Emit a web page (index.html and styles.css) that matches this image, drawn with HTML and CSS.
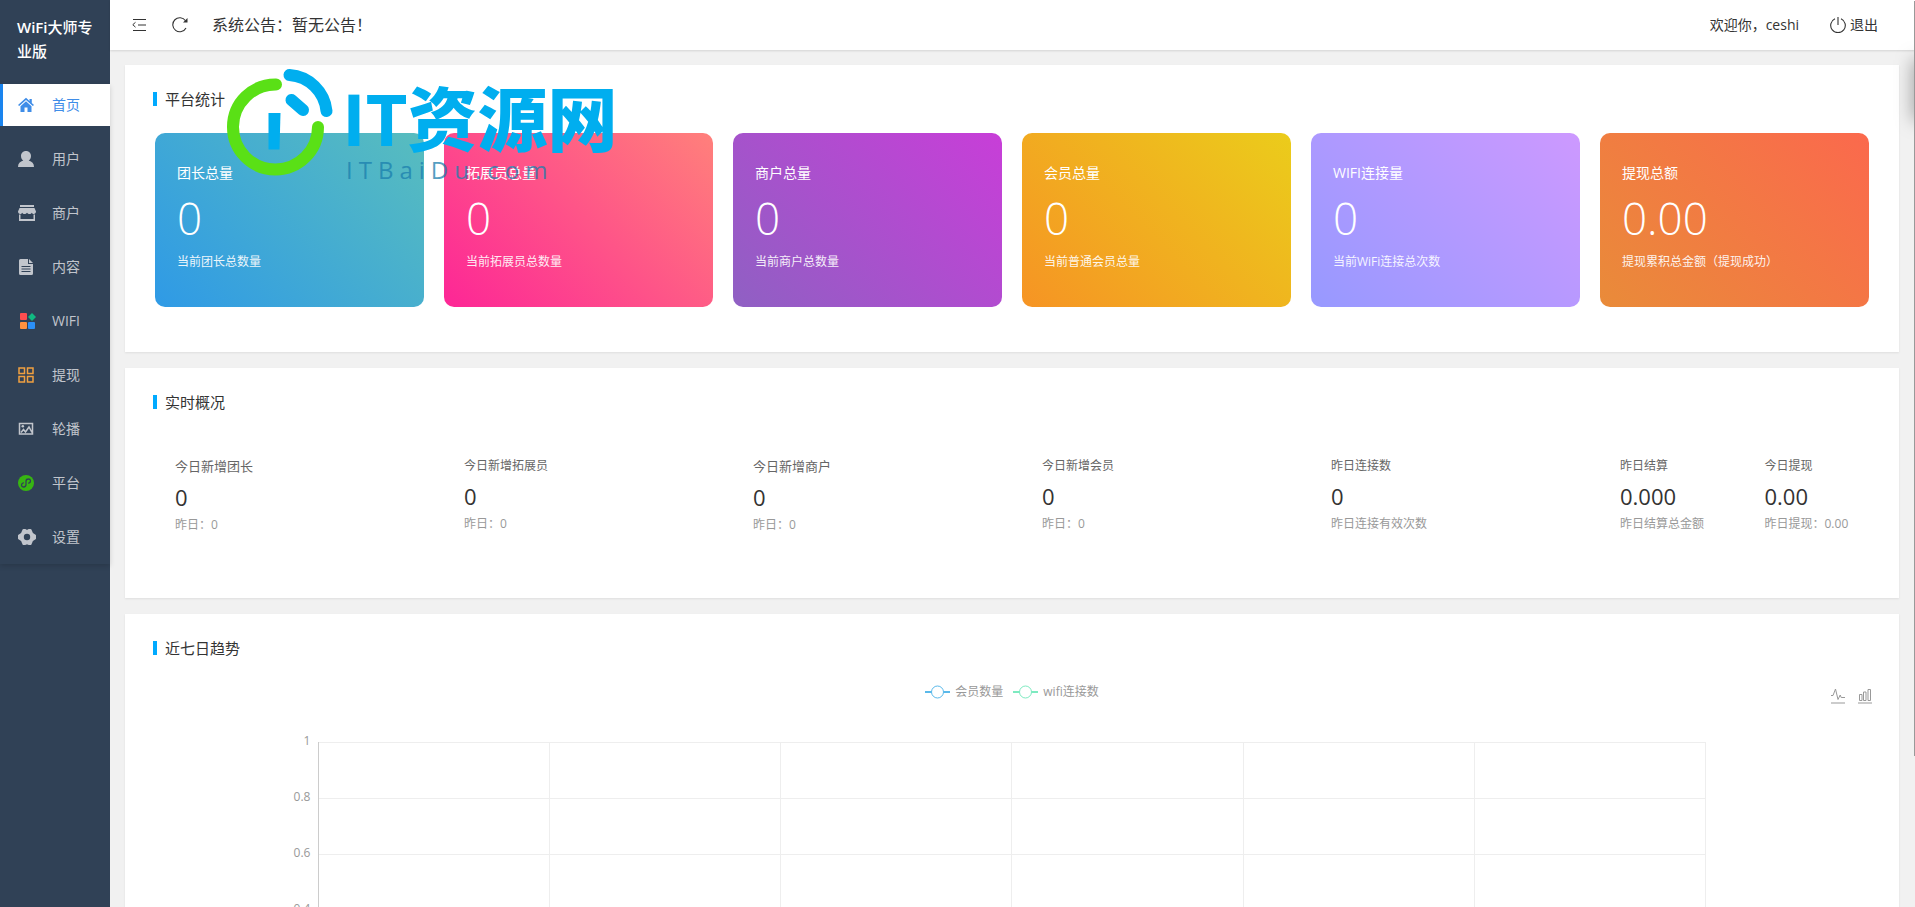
FILE: index.html
```html
<!DOCTYPE html>
<html lang="zh-CN">
<head>
<meta charset="utf-8">
<title>WiFi大师专业版</title>
<link rel="stylesheet" href="styles.css">
</head>
<body>
<div class="layout">
  <aside class="sidebar">
    <h1 class="brand"><b>WiFi</b>大师专业版</h1>
    <nav class="nav">
      <a class="nav-item active" href="#"><svg class="icon" viewBox="0 0 16 16"><path fill="currentColor" d="M8 .8 0 8l1.200 1L8 3l6.800 6 1.200-1-2.200-2V2h-2.300v2zM8 4.300 2.500 9.200V15h4v-4.500h3V15h4V9.200z"/></svg>首页</a>
      <a class="nav-item" href="#"><svg class="icon" viewBox="0 0 16 16"><path fill="currentColor" d="M8 0c3 0 5 2.200 5 5 0 2-.9 3.700-2.300 4.600C14 10.500 16 12.500 16 16H0c0-3.500 2-5.500 5.300-6.400C3.900 8.700 3 7 3 5c0-2.800 2-5 5-5z"/></svg>用户</a>
      <a class="nav-item" href="#"><svg class="icon wide" viewBox="0 0 18 16"><path fill="currentColor" d="M2 0h14v2H2zM1.500 3h15L18 6.500c0 2.800-3.200 3.200-4.200 1.200-.8 1.800-3.600 1.800-4.800 0-1.200 1.800-4 1.800-4.800 0C3.200 9.700 0 9.300 0 6.500zM1 9.500h1.500V14h13V9.500H17V16H1z"/></svg>商户</a>
      <a class="nav-item" href="#"><svg class="icon" viewBox="0 0 16 16"><path fill="currentColor" d="M1 1.500Q1 0 2.500 0H10v5h5v9.500q0 1.500-1.500 1.500h-11Q1 16 1 14.500zM11 0l4 4h-4z"/><path stroke="#304156" d="M3.500 7.500h9M3.500 10h9M3.500 12.500h9"/></svg>内容</a>
      <a class="nav-item" href="#"><svg class="icon wide" viewBox="0 0 18 16"><rect x="2" width="7" height="7" rx="1" fill="#ff4d4f"/><path fill="#10b981" d="m14 0 4 4-4 4-4-4z"/><rect x="2" y="9" width="7" height="7" rx="1" fill="#ff9140"/><rect x="10" y="9" width="7" height="7" rx="1" fill="#2b8ff7"/></svg>WIFI</a>
      <a class="nav-item" href="#"><svg class="icon" viewBox="0 0 16 16"><path fill="none" stroke="#f0a040" stroke-width="1.500" d="M1 1h5.500v5.500H1zM9.500 1H15v5.500H9.500zM1 9.500h5.500V15H1zM9.500 9.500H15V15H9.500z"/></svg>提现</a>
      <a class="nav-item" href="#"><svg class="icon" viewBox="0 0 16 16"><path fill="none" stroke="currentColor" stroke-width="1.500" d="M1.500 2.500h13v10.500h-13zM3 11.500l2.500-3 2 2.500L11 6l3 5.500"/><circle cx="4.800" cy="5.300" r="1.300" fill="currentColor"/></svg>轮播</a>
      <a class="nav-item" href="#"><svg class="icon" viewBox="0 0 16 16"><circle cx="8" cy="8" r="8" fill="#37b512"/><path fill="none" stroke="#304156" stroke-width="1.300" stroke-linecap="round" d="M5.300 7.800C2.600 8.600 3 12.200 5.700 12c1.500-.1 2.300-1.100 2.300-2.500v-3C8 5 9 4 10.300 4c2.700-.1 3 3.400.4 4.200"/></svg>平台</a>
      <a class="nav-item" href="#"><svg class="icon wide" viewBox="0 0 18 16"><path fill="currentColor" stroke="currentColor" stroke-width="2" stroke-linejoin="round" d="M5.500 1h1.800L9 2l1.700-1h1.800L14 4.500 17 6.500v3L14 11.500 12.500 15h-1.800L9 14l-1.700 1H5.500L4 11.500 1 9.500v-3L4 4.500z"/><circle cx="9" cy="8" r="3.200" fill="#304156"/></svg>设置</a>
    </nav>
  </aside>
  <div class="body">
    <header class="topbar">
      <button class="tool" aria-label="收起菜单"><svg class="icon" viewBox="0 0 16 16"><path fill="none" stroke="currentColor" d="M1 2.500h13M6 8h8M1 13.500h13M3.500 5.300 .8 7.700l2.700 2.500"/></svg></button>
      <button class="tool" aria-label="刷新"><svg class="icon" viewBox="0 0 16 16"><path fill="none" stroke="currentColor" stroke-width="1.100" d="M14 11a7 7 0 1 1-.5-7.300"/><path fill="currentColor" d="M15.500 1v4.500H11z"/></svg></button>
      <span class="notice">系统公告：暂无公告！</span>
      <span class="welcome">欢迎你，ceshi</span>
      <a class="logout" href="#"><svg class="icon" viewBox="0 0 16 16"><path fill="none" stroke="currentColor" stroke-width="1.100" d="M5 1.700a7.300 7.300 0 1 0 6 0M8 0v8"/></svg>退出</a>
    </header>
    <main class="content">
      <section class="panel">
        <h2 class="title">平台统计</h2>
        <div class="cards">
          <article class="card blue"><h3>团长总量</h3><strong>0</strong><p>当前团长总数量</p></article>
          <article class="card pink"><h3>拓展员总量</h3><strong>0</strong><p>当前拓展员总数量</p></article>
          <article class="card purple"><h3>商户总量</h3><strong>0</strong><p>当前商户总数量</p></article>
          <article class="card yellow"><h3>会员总量</h3><strong>0</strong><p>当前普通会员总量</p></article>
          <article class="card violet"><h3>WIFI连接量</h3><strong>0</strong><p>当前WiFi连接总次数</p></article>
          <article class="card orange"><h3>提现总额</h3><strong>0.00</strong><p>提现累积总金额（提现成功）</p></article>
        </div>
      </section>
      <section class="panel">
        <h2 class="title">实时概况</h2>
        <div class="live">
          <div class="stat large"><h3>今日新增团长</h3><strong>0</strong><p>昨日：0</p></div>
          <div class="stat"><h3>今日新增拓展员</h3><strong>0</strong><p>昨日：0</p></div>
          <div class="stat large"><h3>今日新增商户</h3><strong>0</strong><p>昨日：0</p></div>
          <div class="stat"><h3>今日新增会员</h3><strong>0</strong><p>昨日：0</p></div>
          <div class="stat"><h3>昨日连接数</h3><strong>0</strong><p>昨日连接有效次数</p></div>
          <div class="stat"><h3>昨日结算</h3><strong>0.000</strong><p>昨日结算总金额</p></div>
          <div class="stat"><h3>今日提现</h3><strong>0.00</strong><p>昨日提现：0.00</p></div>
        </div>
      </section>
      <section class="panel">
        <h2 class="title">近七日趋势</h2>
        <div class="chart">
          <div class="chart-head">
            <div class="legend">
              <span class="key"><svg class="mark" viewBox="0 0 25 14"><path stroke="#5ab9ea" stroke-width="2" d="M0 7h25"/><circle cx="12.500" cy="7" r="6" fill="#fff" stroke="#5ab9ea"/></svg>会员数量</span>
              <span class="key"><svg class="mark" viewBox="0 0 25 14"><path stroke="#7deac0" stroke-width="2" d="M0 7h25"/><circle cx="12.500" cy="7" r="6" fill="#fff" stroke="#7deac0"/></svg>wifi连接数</span>
            </div>
            <div class="switches">
              <button class="tool" aria-label="切换为折线图"><svg class="icon" viewBox="0 0 16 16"><path fill="none" stroke="currentColor" d="M1 7.500h2L5.500 1 8 11.500l2.200-4.500 1 2.500H15M1 15h14"/></svg></button>
              <button class="tool" aria-label="切换为柱状图"><svg class="icon" viewBox="0 0 16 16"><path fill="none" stroke="currentColor" d="M2.500 6.500h2.500v6H2.500zM6.500 4H9v8.500H6.500zM11 1.500h2.500v11H11zM1 15h14"/></svg></button>
            </div>
          </div>
          <div class="plot">
            <div class="row"><span>1</span><i></i><i></i><i></i><i></i><i></i><i></i></div>
            <div class="row"><span>0.8</span><i></i><i></i><i></i><i></i><i></i><i></i></div>
            <div class="row"><span>0.6</span><i></i><i></i><i></i><i></i><i></i><i></i></div>
            <div class="row"><span>0.4</span><i></i><i></i><i></i><i></i><i></i><i></i></div>
            <div class="row"><span>0.2</span><i></i><i></i><i></i><i></i><i></i><i></i></div>
          </div>
        </div>
      </section>
    </main>
  </div>
  <div class="watermark">
    <svg class="emblem" viewBox="0 0 110 110"><g fill="none" stroke-width="12" stroke-linecap="round"><path stroke="#5ae016" d="M52 16.500A42.500 42.500 0 1 0 94 59"/><path stroke="#00aeef" d="M65.500 7A40 40 0 0 1 102.500 43M67.500 32 79 42"/></g><path fill="#00aeef" d="M44.500 45h12l-1 36.500h-11z"/></svg>
    <div class="wordmark"><div class="site"><b>IT</b>资源网</div><div class="domain">ITBaiDu.com</div></div>
  </div>
  <div class="drawer-edge"></div>
  <div class="scroll-edge"></div>
</div>
</body>
</html>
```
FILE: styles.css
```css
* { box-sizing: border-box; }
body, h1, h2, h3, p { margin: 0; }
h1, h2, h3, strong { font-weight: 400; }
body {
  font: 14px/24px "Open Sans", "Noto Sans CJK SC", sans-serif;
  color: #333;
  background: #f1f1f1;
}
a { color: inherit; text-decoration: none; }
.icon { width: 16px; height: 16px; flex: none; }
.icon.wide { width: 18px; }
.layout { position: relative; display: flex; height: 100vh; overflow: hidden; }

.sidebar { width: 110px; flex: none; background: #304156; }
.brand { padding: 15px 16px 21px 17px; font-size: 15px; font-weight: 500; line-height: 24px; color: #fff; }
.brand b { font-weight: 600; }
.nav { padding-bottom: 6px; box-shadow: 0 2px 5px rgba(0, 0, 0, .15); }
.nav-item {
  display: grid; grid-template-columns: 34px 1fr; align-items: center;
  height: 42px; margin-bottom: 12px; padding-left: 15px;
  border-left: 3px solid transparent;
  color: #c1c5cc;
}
.nav-item:last-child { margin-bottom: 0; }
.nav-item.active { background: #fff; color: #3f8de8; border-left-color: #1a84ee; }

.body { flex: 1; min-width: 0; }
.topbar {
  display: flex; align-items: center; height: 50px; padding: 0 37px 0 22px;
  background: #fff; box-shadow: 0 1px 2px rgba(0, 0, 0, .12);
}
.tool { display: flex; padding: 0; border: 0; background: none; color: #333; }
.topbar .tool { margin-right: 24px; }
.notice { font-size: 16px; }
.welcome { margin-left: auto; margin-right: 31px; }
.logout { display: flex; align-items: center; gap: 4px; }

.content { display: grid; gap: 16px; padding: 15px 16px 15px 15px; }
.panel { padding: 22px 20px 45px; background: #fff; box-shadow: 0 1px 2px rgba(0, 0, 0, .08); }
.title { display: flex; align-items: center; gap: 8px; margin-left: 8px; font-size: 15px; line-height: 24px; }
.title::before { content: ""; width: 4px; height: 14px; background: #00aaff; }

.cards { display: grid; grid-template-columns: repeat(6, 1fr); gap: 20px; padding: 22px 10px 0; }
.card { height: 174px; padding: 28px 22px; border-radius: 10px; color: #fff; }
.card h3 { font-size: 14px; }
.card strong { display: block; font-size: 44px; font-weight: 300; line-height: 44px; margin: 11px 0 14px; }
.card p { font-size: 12px; line-height: 16px; opacity: .9; }
.blue { background: linear-gradient(45deg, #2f9ae6, #58bdbe); }
.pink { background: linear-gradient(45deg, #fd2696, #ff807b); }
.purple { background: linear-gradient(45deg, #8f60c3, #c83ed8); }
.yellow { background: linear-gradient(45deg, #f69424, #ebcc1b); }
.violet { background: linear-gradient(45deg, #9799ff, #cd99ff); }
.orange { background: linear-gradient(45deg, #e98b39, #fb694d); }

.live { display: grid; grid-template-columns: repeat(5, 2fr) 1fr 1fr; padding: 40px 0 7px; margin: 0 -10px 0 10px; }
.stat { padding-left: 20px; height: 92px; white-space: nowrap; }
.stat h3 { font-size: 12px; line-height: 24px; color: #666; }
.stat.large h3 { font-size: 13px; margin-bottom: 1px; }
.stat strong { display: block; font-size: 22px; line-height: 36px; }
.stat p { font-size: 12px; line-height: 20px; color: #999; }

.chart { color: #999; font-size: 12px; }
.chart-head { display: grid; grid-template-columns: 1fr auto 1fr; padding: 20px 6px 0; height: 82px; }
.legend { grid-column: 2; display: flex; gap: 10px; height: 24px; }
.key { display: flex; align-items: center; gap: 5px; }
.mark { width: 25px; height: 14px; }
.switches { display: flex; justify-content: flex-end; gap: 11px; padding-top: 8px; }
.switches .tool { color: #999; height: 16px; }
.plot { margin: 0 10%; border-left: 1px solid #ccc; }
.row { position: relative; display: grid; grid-template-columns: repeat(6, 1fr); height: 56px; }
.row i { border-top: 1px solid #eee; border-right: 1px solid #eee; }
.row span { position: absolute; right: 100%; top: -13px; padding-right: 9px; }

.watermark { position: absolute; left: 224px; top: 68px; display: flex; gap: 8px; color: #00aeef; pointer-events: none; }
.emblem { width: 110px; height: 110px; }
.site { display: flex; font: 900 70px/68px "Noto Sans CJK SC", sans-serif; padding-top: 14px; }
.site b { font: 700 72px/72px "Open Sans", sans-serif; }
.domain { font-size: 24px; line-height: 32px; letter-spacing: 6px; padding-left: 4px; color: #1b7fae; opacity: .75; }
.drawer-edge { position: absolute; left: 100%; top: 60px; width: 10px; height: 60px; box-shadow: 0 0 18px rgba(0, 0, 0, .5); }
.scroll-edge { position: absolute; right: 0; top: 1px; width: 1px; height: 755px; background: #999; }
```
